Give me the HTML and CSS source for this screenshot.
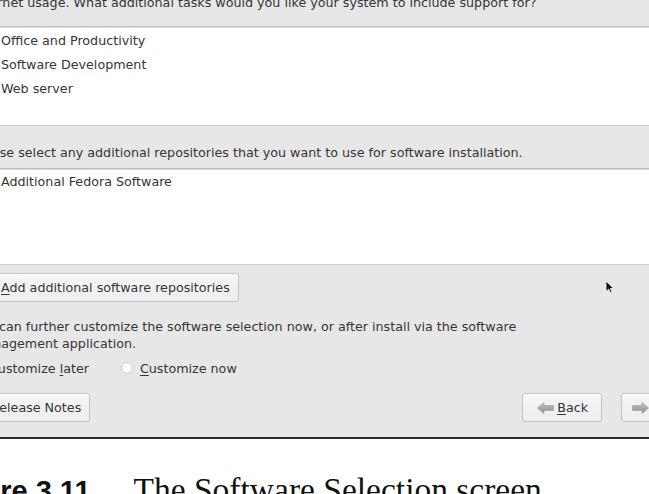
FILE: index.html
```html
<!DOCTYPE html>
<html lang="en">
<head>
<meta charset="utf-8">
<title>Software Selection</title>
<link rel="stylesheet" href="styles.css">
</head>
<body>
<div class="shot">
  <div class="window">
    <div class="intro">The default installation of Fedora includes a set of software applicable for general<br>internet usage. What additional tasks would you like your system to include support for?</div>

    <div class="list tasks">
      <div class="row"><span class="check on"></span>Office and Productivity</div>
      <div class="row"><span class="check on"></span>Software Development</div>
      <div class="row"><span class="check"></span>Web server</div>
    </div>

    <div class="label">Please select any additional repositories that you want to use for software installation.</div>

    <div class="list repos">
      <div class="row"><span class="check"></span>Additional Fedora Software</div>
    </div>

    <div class="actions">
      <button class="btn add"><u>A</u>dd additional software repositories</button>
    </div>

    <p class="note">You can further customize the software selection now, or after install via the software<br>management application.</p>

    <div class="radios">
      <label class="radio"><span class="dot on"></span><span>Customize <u>l</u>ater</span></label>
      <label class="radio"><span class="dot"></span><span><u>C</u>ustomize now</span></label>
    </div>

    <div class="footer">
      <button class="btn notes">Release Notes</button>
      <button class="btn nav back">
        <svg class="arrow" width="17" height="12" viewBox="0 0 17 12"><defs><linearGradient id="ga" x1="0" y1="0" x2="0" y2="1"><stop offset="0" stop-color="#c4c4c4"/><stop offset="1" stop-color="#8e8e8e"/></linearGradient></defs><path d="M0.5 6 L7 0.5 V3.5 H16.5 V8.5 H7 V11.5 Z" fill="url(#ga)" stroke="#9a9a9a" stroke-width="0.6"/></svg><span><u>B</u>ack</span>
      </button>
      <button class="btn nav next">
        <svg class="arrow" width="17" height="12" viewBox="0 0 17 12"><defs><linearGradient id="gb" x1="0" y1="0" x2="0" y2="1"><stop offset="0" stop-color="#c4c4c4"/><stop offset="1" stop-color="#8e8e8e"/></linearGradient></defs><path d="M16.5 6 L10 0.5 V3.5 H0.5 V8.5 H10 V11.5 Z" fill="url(#gb)" stroke="#9a9a9a" stroke-width="0.6"/></svg><span><u>N</u>ext</span>
      </button>
    </div>

    <svg class="pointer" width="10" height="14" viewBox="0 0 10 14"><path d="M1 1 V11.5 L3.6 9.2 L5.6 13 L7.2 12.2 L5.3 8.6 H8.8 Z" fill="#111" stroke="#fff" stroke-width="0.8"/></svg>
  </div>

  <div class="caption"><b class="fig">Figure 3.11</b><span class="title">The Software Selection screen</span></div>
</div>
</body>
</html>
```

FILE: styles.css
```css
html, body {
  margin: 0;
  padding: 0;
}

body {
  width: 649px;
  height: 494px;
  overflow: hidden;
  background: #fff;
  font-family: "DejaVu Sans", sans-serif;
  font-size: 12.7px;
  color: #353535;
}

.shot {
  position: relative;
}

/* installer window, its left edge runs past the frame */
.window {
  position: relative;
  width: 727px;
  margin: -23px 0 0 -27px;
  background: #e7e7e7;
  border-bottom: 2px solid #2c2c2c;
}

.intro {
  line-height: 17px;
  padding-bottom: 15px;
  white-space: nowrap;
}

.list {
  box-sizing: border-box;
  background: #fff;
  border-top: 1px solid #bdbdbd;
  border-bottom: 1px solid #cdcdcd;
  box-shadow: inset 0 1px 0 #dcdcdc;
}

.tasks {
  height: 100px;
  padding-top: 1px;
}

.repos {
  height: 97px;
}

.row {
  display: flex;
  align-items: center;
  height: 24px;
  padding-left: 6px;
  white-space: nowrap;
}

.check {
  width: 12px;
  height: 12px;
  margin-right: 8px;
  border: 1px solid #9a9a9a;
  border-radius: 2px;
  background: #fff;
}

.label {
  padding: 18px 0 7px;
  line-height: 17px;
  white-space: nowrap;
}

.actions {
  padding: 8px 0 0 19px;
}

.btn {
  box-sizing: border-box;
  height: 29px;
  padding: 0 8px;
  border: 1px solid #c2c2c2;
  border-radius: 3px;
  background: linear-gradient(#f6f6f6, #ededed);
  box-shadow: inset 0 1px 0 #fff;
  font: inherit;
  color: inherit;
  white-space: nowrap;
}

u {
  text-decoration-thickness: 1px;
  text-underline-offset: 2px;
}

.note {
  margin: 0;
  padding-top: 15.5px;
  line-height: 17px;
  white-space: nowrap;
}

.radios {
  display: flex;
  gap: 32px;
  padding: 8px 0 0;
  margin-left: -3px;
  line-height: 17px;
}

.radio {
  display: flex;
  align-items: center;
  gap: 7px;
  white-space: nowrap;
}

.dot {
  box-sizing: border-box;
  width: 12px;
  height: 12px;
  border: 1px solid #cfcfcf;
  border-radius: 50%;
  background: radial-gradient(circle at 50% 40%, #fff 50%, #f0f0f0);
}

.footer {
  display: flex;
  align-items: center;
  padding: 16.5px 4px 15px 9px;
}

.nav {
  display: flex;
  align-items: center;
  gap: 3px;
  padding: 0 13px 0 14px;
}

.back {
  margin-left: auto;
}

.next {
  margin-left: 19px;
  width: 75px;
  padding-left: 10px;
}

.arrow {
  display: block;
}

.pointer {
  position: absolute;
  left: 632px;
  top: 303px;
}

/* figure caption printed under the screenshot */
.caption {
  display: flex;
  align-items: baseline;
  margin: 34px 0 0 -61px;
  white-space: nowrap;
  color: #111;
}

.fig {
  font-family: "Liberation Sans", Arial, sans-serif;
  font-weight: bold;
  font-size: 29px;
  line-height: 1;
}

.title {
  margin-left: 43px;
  font-family: "Liberation Serif", "Times New Roman", serif;
  font-size: 33.5px;
  line-height: 1;
}
```
